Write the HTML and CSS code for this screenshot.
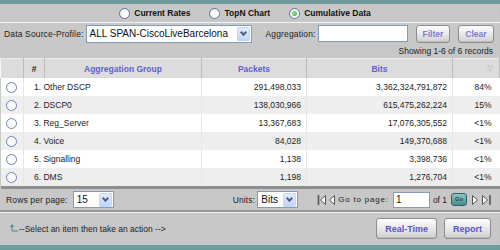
FILE: index.html
```html
<!DOCTYPE html>
<html lang="en">
<head>
    <meta charset="UTF-8">
    <title>Cumulative Data</title>
    <link rel="stylesheet" href="styles.css">
</head>
<body>
  <div id="panel">
    <div class="modes">
      <label class="mode"><span class="radio"></span>Current Rates</label>
      <label class="mode"><span class="radio"></span>TopN Chart</label>
      <label class="mode"><span class="radio on"></span>Cumulative Data</label>
    </div>

    <div class="filters">
      <span class="label">Data Source-Profile:</span>
      <div class="select profile"><span>ALL SPAN-CiscoLiveBarcelona</span><i class="arrow"></i></div>
      <span class="label agg">Aggregation:</span>
      <div class="field agg-field"></div>
      <button class="btn light">Filter</button>
      <button class="btn light">Clear</button>
    </div>

    <div class="records">Showing 1-6 of 6 records</div>

    <table class="grid">
      <thead>
        <tr>
          <th class="c-sel"></th>
          <th class="c-num">#</th>
          <th class="c-name">Aggregation Group</th>
          <th class="c-pk">Packets</th>
          <th class="c-bits">Bits</th>
          <th class="c-pct"><span class="sort">&#9661;</span></th>
        </tr>
      </thead>
      <tbody>
        <tr><td><span class="radio row"></span></td><td colspan="2" class="name">1. Other DSCP</td><td class="n">291,498,033</td><td class="n">3,362,324,791,872</td><td class="n">84%</td></tr>
        <tr><td><span class="radio row"></span></td><td colspan="2" class="name">2. DSCP0</td><td class="n">138,030,966</td><td class="n">615,475,262,224</td><td class="n">15%</td></tr>
        <tr><td><span class="radio row"></span></td><td colspan="2" class="name">3. Reg_Server</td><td class="n">13,367,683</td><td class="n">17,076,305,552</td><td class="n">&lt;1%</td></tr>
        <tr><td><span class="radio row"></span></td><td colspan="2" class="name">4. Voice</td><td class="n">84,028</td><td class="n">149,370,688</td><td class="n">&lt;1%</td></tr>
        <tr><td><span class="radio row"></span></td><td colspan="2" class="name">5. Signalling</td><td class="n">1,138</td><td class="n">3,398,736</td><td class="n">&lt;1%</td></tr>
        <tr><td><span class="radio row"></span></td><td colspan="2" class="name">6. DMS</td><td class="n">1,198</td><td class="n">1,276,704</td><td class="n">&lt;1%</td></tr>
      </tbody>
    </table>

    <div class="pager">
      <span class="label">Rows per page:</span>
      <div class="select small rows"><span>15</span><i class="arrow"></i></div>
      <span class="label units">Units:</span>
      <div class="select small"><span>Bits</span><i class="arrow"></i></div>
      <div class="nav">
        <svg class="first" width="10" height="12" viewBox="0 0 10 12"><path d="M1.5 1v10" stroke="#555" stroke-width="1.6"/><path d="M8.5 1.5L3.5 6l5 4.5z" fill="#fff" stroke="#555"/></svg>
        <svg class="prev" width="8" height="12" viewBox="0 0 8 12"><path d="M6.5 1.5L1.5 6l5 4.5z" fill="#fff" stroke="#555"/></svg>
        <span class="goto">Go to page:</span>
        <div class="field page">1</div>
        <span class="of">of 1</span>
        <span class="go">Go</span>
        <svg class="next" width="8" height="12" viewBox="0 0 8 12"><path d="M1.5 1.5L6.5 6l-5 4.5z" fill="#fff" stroke="#555"/></svg>
        <svg class="last" width="11" height="12" viewBox="0 0 11 12"><path d="M1.5 1.5L6.5 6l-5 4.5z" fill="#fff" stroke="#555"/><path d="M9 1v10" stroke="#555" stroke-width="1.6"/></svg>
      </div>
    </div>

    <div class="actions">
      <span class="hint"><svg class="up" width="8" height="8" viewBox="0 0 8 8"><path d="M2 7V2M2 7h6" stroke="#3f8f8c" fill="none"/><path d="M0 3l2-3 2 3z" fill="#3f8f8c"/></svg>--Select an item then take an action --&gt;</span>
      <button class="btn">Real-Time</button>
      <button class="btn">Report</button>
    </div>
  </div>
</body>
</html>
```

FILE: styles.css
```css
body {
  margin: 0;
  font-family: "Liberation Sans", Arial, sans-serif;
  font-size: 8.5px;
  color: #222;
}
#panel {
  width: 500px;
  height: 250px;
  box-sizing: border-box;
  border-top: 4px solid #6c9c9b;
  border-bottom: 5px solid #6c9c9b;
  background-color: #c6c6c6;
  background-image: repeating-linear-gradient(90deg, rgba(255,255,255,0.06) 0 1px, transparent 1px 2px);
  display: flex;
  flex-direction: column;
}
.modes {
  height: 18px;
  display: flex;
  justify-content: center;
  align-items: center;
  gap: 19px;
  padding-right: 10px;
  border-bottom: 1px solid #f2f2f2;
}
.mode {
  display: flex;
  align-items: center;
  gap: 4px;
  font-weight: bold;
  color: #111;
}
.radio {
  display: inline-block;
  width: 9px;
  height: 9px;
  border-radius: 50%;
  border: 1px solid #5f7597;
  background: radial-gradient(circle at 60% 65%, #fff 30%, #dde3ea 100%);
  position: relative;
}
.radio.on::after {
  content: "";
  position: absolute;
  left: 2px;
  top: 2px;
  width: 5px;
  height: 5px;
  border-radius: 50%;
  background: radial-gradient(circle at 40% 40%, #9ee59e, #2f9a2f);
}
.radio.row {
  border-color: #6f86ad;
  background: #fbfbfb;
}
.filters {
  height: 21px;
  display: flex;
  align-items: center;
  padding-left: 4px;
}
.label {
  color: #222;
  letter-spacing: 0.15px;
}
.select {
  box-sizing: border-box;
  height: 18px;
  border: 1px solid #7f9db9;
  background: #fff;
  display: flex;
  align-items: center;
  justify-content: space-between;
  padding-left: 3px;
  font-size: 10px;
  color: #111;
}
.select .arrow {
  width: 13px;
  height: 14px;
  margin-right: 1px;
  background: linear-gradient(#e2ebfe, #c2d4fa);
  border: 1px solid #c6d6f7;
  border-radius: 1px;
  box-sizing: border-box;
  position: relative;
}
.select .arrow::after {
  content: "";
  position: absolute;
  left: 3px;
  top: 2px;
  width: 3px;
  height: 3px;
  border-right: 2px solid #4d6185;
  border-bottom: 2px solid #4d6185;
  transform: rotate(45deg);
}
.profile {
  width: 166px;
  margin-left: 2px;
}
.label.agg {
  margin-left: 14px;
}
.field {
  box-sizing: border-box;
  height: 17px;
  border: 1px solid #7f9db9;
  background: #fff;
}
.agg-field {
  width: 90px;
  margin-left: 2px;
}
.btn {
  font-family: "Liberation Sans", Arial, sans-serif;
  font-size: 8.5px;
  font-weight: bold;
  color: #5757c2;
  height: 18px;
  padding: 0 6px;
  border: 1px solid #8d8d8d;
  border-radius: 3px;
  background: linear-gradient(#fdfdfd, #e4e4e4 60%, #cfcfcf);
  box-shadow: inset 0 -1px 0 #bdbdbd;
}
.btn.light {
  color: #7c7cd6;
  margin-left: 8px;
}
.records {
  height: 14px;
  line-height: 14px;
  text-align: right;
  padding-right: 7px;
  color: #222;
}
.grid {
  width: 500px;
  border-collapse: collapse;
  table-layout: fixed;
  border-bottom: 3px solid #8e8e8e;
}
.grid th {
  height: 19px;
  padding: 0;
  background: #dcdcdc;
  color: #5f5fcf;
  font-weight: bold;
  border-left: 1px solid #f6f6f6;
  border-right: 1px solid #bcbcbc;
  border-top: 1px solid #ededed;
}
.c-sel { width: 22px; }
.c-num { width: 20px; color: #222 !important; }
.c-name { width: 156px; }
.c-pk { width: 104px; }
.c-bits { width: 145px; }
.sort {
  float: right;
  margin-right: 6px;
  color: #b5b5b5;
  font-weight: normal;
  font-size: 8px;
}
.grid td {
  height: 18px;
  padding: 0;
  background: #fff;
  color: #222;
  border-right: 1px solid #e6e6e6;
}
.grid tbody tr:nth-child(even) td {
  background: #eeeeee;
}
.grid td:first-child {
  text-align: center;
}
.grid td .radio {
  vertical-align: middle;
}
.grid td.name {
  padding-left: 10px;
}
.grid td.n {
  text-align: right;
  padding-right: 5px;
}
.grid td:last-child {
  padding-right: 8px;
  border-right: none;
}
.pager {
  height: 21px;
  display: flex;
  align-items: center;
  padding-left: 6px;
  border-bottom: 2px solid #989898;
  box-shadow: 0 1px 0 #f0f0f0;
}
.select.small {
  width: 41px;
  height: 17px;
  margin-left: 2px;
}
.select.rows {
  margin-left: 5px;
}
.label.units {
  margin-left: 119px;
}
.nav {
  display: flex;
  align-items: center;
  margin-left: 19px;
}
.nav .prev { margin-left: 1px; }
.goto {
  font-size: 8px;
  letter-spacing: 0.8px;
  margin-left: 2px;
}
.field.page {
  width: 37px;
  height: 16px;
  font-size: 10px;
  padding-left: 2px;
  line-height: 14px;
  margin-left: 4px;
}
.of {
  margin-left: 3px;
}
.go {
  width: 14px;
  height: 11px;
  margin-left: 4px;
  border: 1px solid #2f6464;
  border-radius: 3px;
  background: linear-gradient(#8fc3c1, #4b8d8b);
  color: #1e4a4a;
  font-size: 6px;
  font-weight: bold;
  text-align: center;
  line-height: 11px;
}
.nav .next { margin-left: 4px; }
.nav .last { margin-left: 2px; }
.actions {
  flex: 1;
  display: flex;
  align-items: center;
  padding: 0 9px 0 10px;
  gap: 7px;
}
.hint {
  flex: 1;
  color: #222;
}
.up {
  margin-right: 1px;
}
.actions .btn {
  height: 21px;
  padding: 0 8px;
  font-size: 9px;
}
```
